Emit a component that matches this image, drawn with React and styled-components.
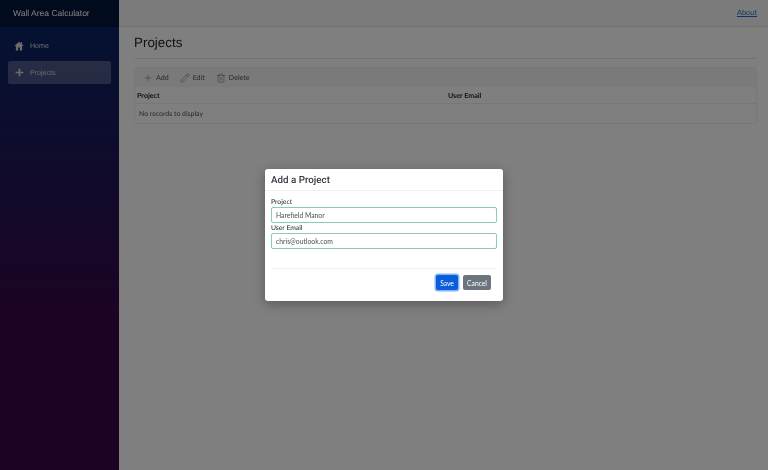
import React from 'react';
import styled, { createGlobalStyle } from 'styled-components';
import { Plus, Pencil, Trash2 } from 'lucide-react';

const GlobalStyle = createGlobalStyle`
  html, body {
    margin: 0;
    height: 100%;
    background: #fff;
    font-family: Lato, "Liberation Sans", sans-serif;
    text-rendering: geometricPrecision;
    overflow: hidden;
  }
  * { box-sizing: border-box; }
`;

const Page = styled.div`
  display: flex;
  height: 470px;
  will-change: transform;
`;

const Sidebar = styled.aside`
  width: 119px;
  flex: none;
  background-image: linear-gradient(180deg, rgb(5, 39, 103) 0%, #3a0647 70%);
`;

const Brand = styled.div`
  height: 27px;
  background: rgba(0, 0, 0, 0.4);
  color: #fff;
  font: 8.5px/26px "Liberation Sans", sans-serif;
  padding-left: 13px;
`;

const Nav = styled.nav`
  display: flex;
  flex-direction: column;
  gap: 4px;
  padding: 7px 8px 0;
`;

const NavItem = styled.div`
  height: 23px;
  display: flex;
  align-items: center;
  padding-left: 6px;
  border-radius: 2px;
  font: 7.1px "Liberation Sans", sans-serif;
  color: #d7d7d7;
  background: ${(p) => (p.$active ? 'rgba(255, 255, 255, 0.25)' : 'transparent')};
`;

const NavIcon = styled.span`
  width: 16px;
  display: flex;
  svg { color: #d7d7d7; }
`;

const Main = styled.main`
  flex: 1;
  min-width: 0;
`;

const TopRow = styled.header`
  height: 27px;
  background: #f7f7f7;
  border-bottom: 1px solid #e2e2e2;
  display: flex;
  justify-content: flex-end;
  align-items: center;
  padding: 0 11px 1px 0;
`;

const AboutLink = styled.a`
  color: #1b6ec2;
  font-size: 7.4px;
  text-decoration: underline;
`;

const Content = styled.div`
  padding: 7px 11px 0 15px;
`;

const Title = styled.h1`
  margin: 0;
  font: 400 13.4px/17px "Liberation Sans", sans-serif;
  color: #212529;
  padding-bottom: 7px;
  border-bottom: 1px solid #e4e7ea;
`;

const Grid = styled.div`
  margin-top: 8px;
  border: 1px solid #f0f0f0;
  border-radius: 2px;
`;

const Toolbar = styled.div`
  height: 19px;
  background: #f5f5f5;
  display: flex;
  align-items: center;
  gap: 11px;
  padding-left: 8px;
`;

const ToolButton = styled.span`
  display: flex;
  align-items: center;
  gap: 3px;
  font-size: 7.1px;
  color: #495057;
  svg { color: #5c646b; }
`;

const HeadRow = styled.div`
  display: grid;
  grid-template-columns: 311px 1fr;
  height: 17px;
  align-items: center;
  padding-left: 2px;
  border-bottom: 1px solid #eee;
  font-size: 7.1px;
  font-weight: 700;
  color: #212529;
`;

const EmptyRow = styled.div`
  height: 19px;
  display: flex;
  align-items: center;
  padding-left: 4px;
  font-size: 6.9px;
  color: #495057;
`;

const Backdrop = styled.div`
  position: fixed;
  inset: 0;
  background: rgba(0, 0, 0, 0.5);
  display: flex;
  justify-content: center;
  align-items: flex-start;
  padding-top: 169px;
`;

const Dialog = styled.div`
  width: 238px;
  height: 132px;
  background: #fff;
  border-radius: 3px;
  box-shadow: 0 3px 12px rgba(0, 0, 0, 0.3);
  display: flex;
  flex-direction: column;
  will-change: transform;
`;

const DialogHeader = styled.div`
  height: 22px;
  display: flex;
  align-items: center;
  padding: 1px 0 0 6px;
  border-bottom: 1px solid #f0f0f0;
  font: 500 9.8px Roboto, sans-serif;
  color: #343a40;
`;

const DialogBody = styled.div`
  padding: 7px 6px 0;
  height: 77px;
`;

const Label = styled.label`
  display: block;
  font-size: 6.8px;
  line-height: 9px;
  height: 9px;
  color: #212529;
`;

const Input = styled.input`
  display: block;
  width: 100%;
  height: 16px;
  margin-bottom: 1px;
  border: 1px solid #8ccbb3;
  border-radius: 2px;
  padding: 0 4px;
  font: 6.8px Lato, sans-serif;
  color: #495057;
  outline: none;
`;

const DialogFooter = styled.div`
  flex: 1;
  margin: 0 6px;
  border-top: 1px solid #f0f0f0;
  display: flex;
  justify-content: flex-end;
  align-items: flex-start;
  gap: 5px;
  padding: 6px 6px 0 0;
`;

const Button = styled.button`
  height: 15px;
  width: ${(p) => (p.$primary ? '22px' : '28px')};
  padding: 0;
  border: none;
  border-radius: 2px;
  font: 6.7px Lato, sans-serif;
  color: #fff;
  background: ${(p) => (p.$primary ? '#0b5ed7' : '#6c757d')};
  box-shadow: ${(p) => (p.$primary ? '0 0 0 1.5px rgba(49, 132, 253, 0.6)' : 'none')};
`;

const HomeIcon = () => (
  <svg width="10" height="10" viewBox="0 0 16 16" fill="currentColor">
    <path d="M8 1 0.5 8H3v7h3.6v-4.6h2.8V15H13V8h2.5L13 5.7V2h-2v1.8z" />
  </svg>
);

export default function App() {
  return (
    <>
      <GlobalStyle />
      <Page>
        <Sidebar>
          <Brand>Wall Area Calculator</Brand>
          <Nav>
            <NavItem>
              <NavIcon>
                <HomeIcon />
              </NavIcon>
              Home
            </NavItem>
            <NavItem $active>
              <NavIcon>
                <Plus size={11} strokeWidth={3.5} />
              </NavIcon>
              Projects
            </NavItem>
          </Nav>
        </Sidebar>
        <Main>
          <TopRow>
            <AboutLink href="#">About</AboutLink>
          </TopRow>
          <Content>
            <Title>Projects</Title>
            <Grid>
              <Toolbar>
                <ToolButton>
                  <Plus size={10} strokeWidth={1.2} />
                  Add
                </ToolButton>
                <ToolButton>
                  <Pencil size={10} strokeWidth={1.2} />
                  Edit
                </ToolButton>
                <ToolButton>
                  <Trash2 size={10} strokeWidth={1.2} />
                  Delete
                </ToolButton>
              </Toolbar>
              <HeadRow>
                <span>Project</span>
                <span>User Email</span>
              </HeadRow>
              <EmptyRow>No records to display</EmptyRow>
            </Grid>
          </Content>
        </Main>
      </Page>
      <Backdrop>
        <Dialog>
          <DialogHeader>Add a Project</DialogHeader>
          <DialogBody>
            <Label>Project</Label>
            <Input defaultValue="Harefield Manor" />
            <Label>User Email</Label>
            <Input defaultValue="chris@outlook.com" />
          </DialogBody>
          <DialogFooter>
            <Button $primary>Save</Button>
            <Button>Cancel</Button>
          </DialogFooter>
        </Dialog>
      </Backdrop>
    </>
  );
}
